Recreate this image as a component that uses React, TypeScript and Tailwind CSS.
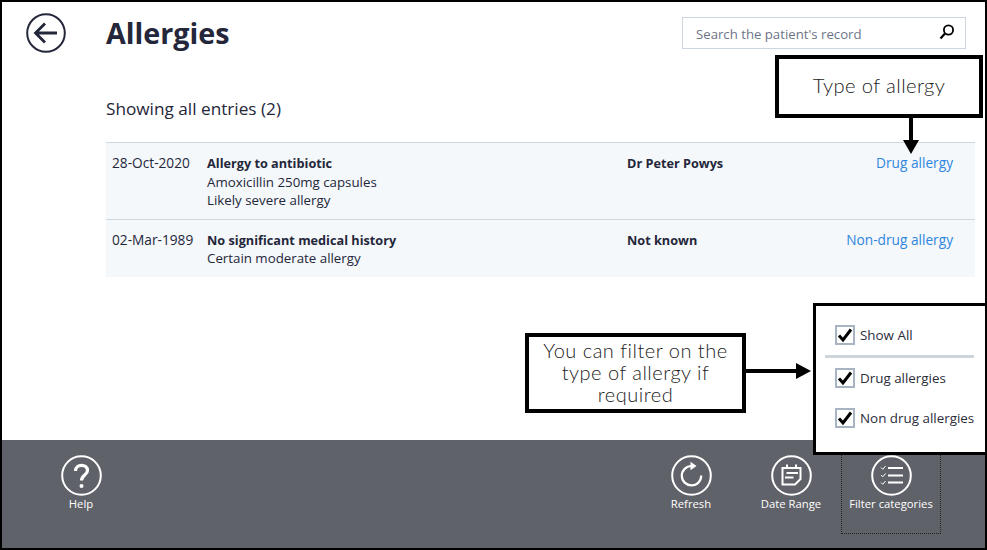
import React from "react";

const rows = [
  {
    date: "28-Oct-2020",
    title: "Allergy to antibiotic",
    lines: ["Amoxicillin 250mg capsules", "Likely severe allergy"],
    author: "Dr Peter Powys",
    type: "Drug allergy",
  },
  {
    date: "02-Mar-1989",
    title: "No significant medical history",
    lines: ["Certain moderate allergy"],
    author: "Not known",
    type: "Non-drug allergy",
  },
];

const Ring: React.FC<{ children: React.ReactNode }> = ({ children }) => (
  <svg width="41" height="41" viewBox="0 0 41 41" fill="none" stroke="#fff" strokeWidth="2">
    <circle cx="20.5" cy="20.5" r="19.3" />
    {children}
  </svg>
);

const FooterButton: React.FC<{ label: string; focused?: boolean; children: React.ReactNode }> = ({
  label,
  focused,
  children,
}) => (
  <div
    className={`w-[100px] h-[80px] pt-[1px] flex flex-col items-center ${
      focused ? "outline-1 outline-dotted outline-[#222] -outline-offset-1" : ""
    }`}
  >
    <Ring>{children}</Ring>
    <span className="text-[11.3px] leading-[16px] text-white whitespace-nowrap">{label}</span>
  </div>
);

const Check: React.FC<{ label: string }> = ({ label }) => (
  <div className="flex items-center gap-[5px]">
    <span className="w-[20px] h-[20px] border-2 border-[#a9b4c2] bg-white flex items-center justify-center shrink-0">
      <svg width="16" height="16" viewBox="0 0 16 16" fill="none" stroke="#000" strokeWidth="3">
        <path d="M2 8.5 L6 13 L14 2.5" />
      </svg>
    </span>
    <span className="text-[13.4px] leading-[18px] text-[#2b2d3a] whitespace-nowrap">{label}</span>
  </div>
);

const App: React.FC = () => {
  return (
    <div className="relative w-[987px] h-[550px] border-2 border-black bg-white flex flex-col overflow-hidden font-['Open_Sans','Noto_Sans',sans-serif] text-[#24263a]">
      <main className="flex-1 flex min-h-0">
        <div className="w-[104px] shrink-0 pl-[24px] pt-[11px]">
          <svg width="40" height="40" viewBox="0 0 40 40" fill="none" stroke="#24263a" strokeWidth="2">
            <circle cx="20" cy="20" r="18.8" />
            <path d="M31 20 H10 M19 10.5 L9.5 20 L19 29.5" strokeWidth="2.8" />
          </svg>
        </div>
        <div className="w-[869px] shrink-0">
          <div className="flex justify-between pt-[15px] pr-[9px]">
            <h1 className="text-[28.7px] leading-[32px] font-bold">Allergies</h1>
            <div className="w-[284px] h-[32px] border border-[#cdd5e2] flex items-center justify-between pl-[13px] pr-[10px]">
              <span className="text-[13.2px] leading-[18px] pt-[2px] text-[#6d7488]">Search the patient's record</span>
              <svg className="-mt-[2px]" width="16" height="16" viewBox="0 0 16 16" fill="none" stroke="#000" strokeWidth="1.8">
                <circle cx="9.5" cy="6" r="4.6" />
                <path d="M6 9.5 L1.5 14.5" strokeWidth="2.2" />
              </svg>
            </div>
          </div>
          <p className="mt-[48px] text-[17.2px] leading-[24px]">Showing all entries (2)</p>
          <div className="mt-[21px] border-t border-[#cdd8e0] bg-[#f4f8fa]">
            {rows.map((r, i) => (
              <div
                key={r.date}
                className={`flex text-[13.3px] leading-[18px] pl-[6px] pr-[22px] pt-[11px] ${
                  i === 0 ? "h-[77px] border-b border-[#cdd8e0]" : "h-[57px]"
                }`}
              >
                <div className="w-[95px] shrink-0 text-[13.7px]">{r.date}</div>
                <div className="w-[420px] shrink-0">
                  <div className={`font-bold text-[12.7px] ${i === 0 ? "mb-[1px]" : ""}`}>{r.title}</div>
                  {r.lines.map((l) => (
                    <div key={l}>{l}</div>
                  ))}
                </div>
                <div className="font-bold text-[12.7px]">{r.author}</div>
                <div className="ml-auto text-[13.7px] text-[#2f86e0]">{r.type}</div>
              </div>
            ))}
          </div>
        </div>
      </main>

      <footer className="h-[108px] shrink-0 bg-[#5f6268] flex justify-between pl-[29px] pr-[44px] pt-[14px]">
        <FooterButton label="Help">
          <path d="M14.5 16 C14.5 8.5 26.5 8.5 26.5 15.5 C26.5 20 20.5 20 20.5 25.5" strokeWidth="3.2" />
          <circle cx="20.5" cy="31" r="2" fill="#fff" stroke="none" />
        </FooterButton>
        <div className="flex">
          <FooterButton label="Refresh">
            <path d="M20.5 11 A9.7 9.7 0 1 0 30.2 20.5" strokeWidth="2.2" />
            <path d="M19.5 6.8 L25.5 11 L19.5 15.2 Z" fill="#fff" stroke="none" />
          </FooterButton>
          <FooterButton label="Date Range">
            <path d="M11.5 13 H29.5 V24 L24 29.5 H11.5 Z" strokeWidth="2" />
            <path d="M16 9.5 V13 M25 9.5 V13" strokeWidth="2" />
            <path d="M15.5 18 H27 M14 22.5 H22.5" strokeWidth="2" />
          </FooterButton>
          <FooterButton label="Filter categories" focused>
            <path d="M17 13 H32 M17 20.5 H32 M17 27.5 H32" strokeWidth="2.2" />
            <path d="M10 12.5 L11.8 14.3 L14.5 11 M10 20 L11.8 21.8 L14.5 18.5 M10 27.5 L11.8 29.3 L14.5 26" strokeWidth="1" />
          </FooterButton>
        </div>
      </footer>

      {/* annotation callouts drawn over the screenshot */}
      <div className="absolute left-[773px] top-[53px] w-[208px] h-[63px] border-[4px] border-black bg-white flex items-center justify-center pb-[3px] font-['Lato',sans-serif] font-light text-[20.2px] tracking-[0.4px] text-[#222]">
        Type of allergy
      </div>
      <svg className="absolute left-[899px] top-[116px]" width="20" height="38" viewBox="0 0 20 38" fill="#000">
        <path d="M8 0 H12 V22 H18 L10 36 L2 22 H8 Z" />
      </svg>

      <div className="absolute left-[523px] top-[331px] w-[221px] h-[80px] border-[4px] border-black bg-white flex items-center justify-center text-center pb-[3px] font-['Lato',sans-serif] font-light text-[20px] leading-[22px] tracking-[0.5px] text-[#222]">
        <div className="w-[200px]">You can filter on the type of allergy if required</div>
      </div>
      <svg className="absolute left-[744px] top-[360px]" width="66" height="18" viewBox="0 0 66 18" fill="#000">
        <path d="M0 7 H50 V1 L65 9 L50 17 V11 H0 Z" />
      </svg>

      <div className="absolute left-[811px] top-[301px] w-[175px] h-[152px] border-[3px] border-black bg-white pt-[19px]">
        <div className="pl-[19px]">
          <Check label="Show All" />
        </div>
        <div className="mt-[10px] mx-[9px] w-[149px] h-[3px] bg-[#cdd5dc]" />
        <div className="pl-[19px] mt-[10px] flex flex-col gap-[20px]">
          <Check label="Drug allergies" />
          <Check label="Non drug allergies" />
        </div>
      </div>
    </div>
  );
};

export default App;
